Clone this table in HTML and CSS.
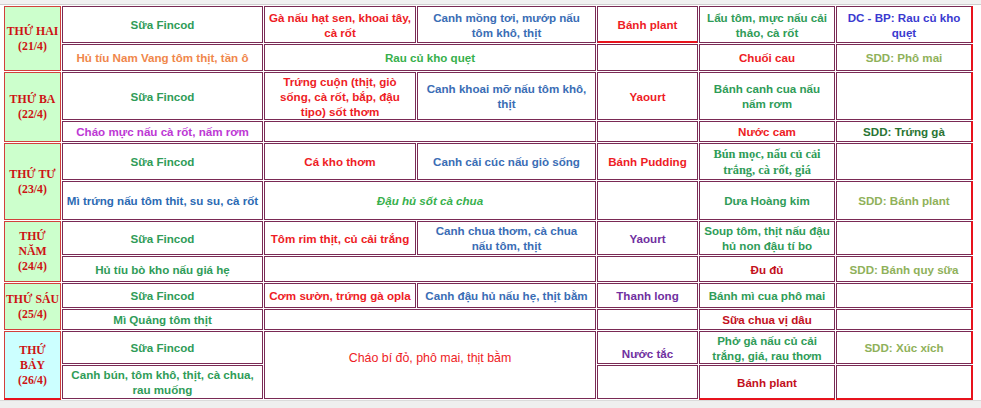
FILE: index.html
```html
<!DOCTYPE html>
<html lang="vi">
<head>
<meta charset="utf-8">
<title>Thực đơn tuần</title>
<link rel="stylesheet" href="styles.css">
</head>
<body>
<div class="sheet-head"></div>
<table class="menu">
  <colgroup>
    <col class="c-day"><col class="c-b"><col class="c-c"><col class="c-d"><col class="c-e"><col class="c-f"><col class="c-g">
  </colgroup>
  <tbody>
    <tr class="h1">
      <td class="day" rowspan="2">THỨ HAI<br>(21/4)</td>
      <td class="green">Sữa Fincod</td>
      <td class="red">Gà nấu hạt sen, khoai tây,<br>cà rốt</td>
      <td class="blue">Canh mồng tơi, mướp nấu<br>tôm khô, thịt</td>
      <td class="red red-under">Bánh plant</td>
      <td class="green">Lẩu tôm, mực nấu cải<br>thảo, cà rốt</td>
      <td class="indigo edge-r">DC - BP: Rau củ kho<br>quẹt</td>
    </tr>
    <tr class="h2">
      <td class="orange">Hủ tíu Nam Vang tôm thịt, tần ô</td>
      <td class="lime" colspan="2">Rau củ kho quẹt</td>
      <td></td>
      <td class="red">Chuối cau</td>
      <td class="olive edge-r">SDD: Phô mai</td>
    </tr>
    <tr class="h3">
      <td class="day" rowspan="2">THỨ BA<br>(22/4)</td>
      <td class="green">Sữa Fincod</td>
      <td class="red">Trứng cuộn (thịt, giò<br>sống, cà rốt, bắp, đậu<br>tipo) sốt thơm</td>
      <td class="blue">Canh khoai mỡ nấu tôm khô,<br>thịt</td>
      <td class="red">Yaourt</td>
      <td class="green">Bánh canh cua nấu<br>nấm rơm</td>
      <td class="edge-r"></td>
    </tr>
    <tr class="h4">
      <td class="magenta">Cháo mực nấu cà rốt, nấm rơm</td>
      <td colspan="2"></td>
      <td></td>
      <td class="red">Nước cam</td>
      <td class="dkgreen edge-r">SDD: Trứng gà</td>
    </tr>
    <tr class="h5">
      <td class="day" rowspan="2">THỨ TƯ<br>(23/4)</td>
      <td class="green">Sữa Fincod</td>
      <td class="red">Cá kho thơm</td>
      <td class="blue">Canh cải cúc nấu giò sống</td>
      <td class="red">Bánh Pudding</td>
      <td class="green serif">Bún mọc, nấu củ cải<br>trắng, cà rốt, giá</td>
      <td class="edge-r"></td>
    </tr>
    <tr class="h6">
      <td class="blue2">Mì trứng nấu tôm thit, su su, cà rốt</td>
      <td class="lime ital" colspan="2">Đậu hủ sốt cà chua</td>
      <td></td>
      <td class="green">Dưa Hoàng kim</td>
      <td class="olive edge-r">SDD: Bánh plant</td>
    </tr>
    <tr class="h7">
      <td class="day" rowspan="2">THỨ<br>NĂM<br>(24/4)</td>
      <td class="green">Sữa Fincod</td>
      <td class="red">Tôm rim thịt, củ cải trắng</td>
      <td class="blue">Canh chua thơm, cà chua<br>nấu tôm, thịt</td>
      <td class="purple">Yaourt</td>
      <td class="green">Soup tôm, thịt nấu đậu<br>hủ non đậu tí bo</td>
      <td class="edge-r"></td>
    </tr>
    <tr class="h8">
      <td class="green">Hủ tíu bò kho nấu giá hẹ</td>
      <td colspan="2"></td>
      <td></td>
      <td class="dkred">Đu đủ</td>
      <td class="olive edge-r">SDD: Bánh quy sữa</td>
    </tr>
    <tr class="h9">
      <td class="day" rowspan="2">THỨ SÁU<br>(25/4)</td>
      <td class="green">Sữa Fincod</td>
      <td class="red">Cơm sườn, trứng gà opla</td>
      <td class="blue">Canh đậu hủ nấu hẹ, thịt bằm</td>
      <td class="purple">Thanh long</td>
      <td class="green">Bánh mì cua phô mai</td>
      <td class="edge-r"></td>
    </tr>
    <tr class="h10">
      <td class="green">Mì Quảng tôm thịt</td>
      <td colspan="2"></td>
      <td></td>
      <td class="dkred">Sữa chua vị dâu</td>
      <td class="edge-r"></td>
    </tr>
    <tr class="h11">
      <td class="day sat edge-b" rowspan="2">THỨ<br>BẢY<br>(26/4)</td>
      <td class="green">Sữa Fincod</td>
      <td class="red plain porridge" colspan="2" rowspan="2">Cháo bí đỏ, phô mai, thịt bằm</td>
      <td class="purple low">Nước tắc</td>
      <td class="green">Phở gà nấu củ cải<br>trắng, giá, rau thơm</td>
      <td class="olive edge-r">SDD: Xúc xích</td>
    </tr>
    <tr class="h12">
      <td class="green">Canh bún, tôm khô, thịt, cà chua,<br>rau muống</td>
      <td></td>
      <td class="dkred edge-b">Bánh plant</td>
      <td class="edge-r edge-b corner"></td>
    </tr>
  </tbody>
</table>
<div class="sheet-foot"></div>
</body>
</html>
```
FILE: styles.css
```css
html, body {
  margin: 0;
  padding: 0;
  background: #ffffff;
}

body {
  width: 981px;
  height: 408px;
  overflow: hidden;
  font-family: "Liberation Sans", Arial, sans-serif;
}

.sheet-head {
  height: 4px;
  background: #f1f1f1;
  border-bottom: 1px solid #cfcfcf;
}

.sheet-foot {
  height: 7px;
  background: #efefef;
  border-top: 1px solid #dadada;
}

.menu {
  margin-left: 3px;
  width: 970px;
  table-layout: fixed;
  border-collapse: separate;
  border-spacing: 1px;
}

.c-day { width: 57px; }
.c-b { width: 201px; }
.c-c { width: 152px; }
.c-d { width: 179px; }
.c-e { width: 101px; }
.c-f { width: 136px; }
.c-g { width: 136px; }

.h1 { height: 37px; }
.h2 { height: 27px; }
.h3 { height: 48px; }
.h4 { height: 21px; }
.h5 { height: 37px; }
.h6 { height: 39px; }
.h7 { height: 34px; }
.h8 { height: 26px; }
.h9 { height: 25px; }
.h10 { height: 21px; }
.h11 { height: 33px; }
.h12 { height: 34px; }

.menu td {
  border: 1px solid #7a2a55;
  padding: 0 1px;
  text-align: center;
  vertical-align: middle;
  font-size: 11.6px;
  line-height: 15px;
  font-weight: bold;
  white-space: nowrap;
  overflow: hidden;
  box-sizing: border-box;
}

.menu td.day {
  background: #ccffcc;
  border-color: #d2403c;
  color: #cc1414;
  font-family: "Liberation Serif", "Times New Roman", serif;
  font-size: 11.8px;
  line-height: 15px;
  padding: 0;
}

.menu td.sat {
  background: #ccffff;
}

.green { color: #2f9c58; }
.lime { color: #37b04c; }
.olive { color: #8fb15a; }
.dkgreen { color: #2a7433; }
.red { color: #ee1c25; }
.dkred { color: #c3101c; }
.blue { color: #3a6db5; }
.blue2 { color: #2b6ab3; }
.indigo { color: #3a3ad0; }
.orange { color: #f0874b; }
.magenta { color: #bd38d4; }
.purple { color: #7030a0; }

.menu td.serif {
  font-family: "Liberation Serif", "Times New Roman", serif;
  font-size: 12.4px;
  line-height: 16px;
}

.menu td.ital {
  font-style: italic;
}

.menu td.plain {
  font-weight: normal;
  font-size: 12.4px;
}

.menu td.porridge {
  padding-bottom: 14px;
}

.menu td.low {
  vertical-align: bottom;
  padding-bottom: 2px;
}

.menu td.red-under {
  border-bottom-color: #e8121c;
  box-shadow: inset 0 -1px 0 #e8121c;
}

.menu td.edge-r {
  border-right-color: #e8121c;
  box-shadow: 1px 0 0 #e8121c;
}

.menu td.edge-b {
  border-bottom-color: #e8121c;
  box-shadow: 0 1px 0 #e8121c;
}

.menu td.corner {
  box-shadow: 1px 0 0 #e8121c, 0 1px 0 #e8121c, 1px 1px 0 #e8121c;
}
```
